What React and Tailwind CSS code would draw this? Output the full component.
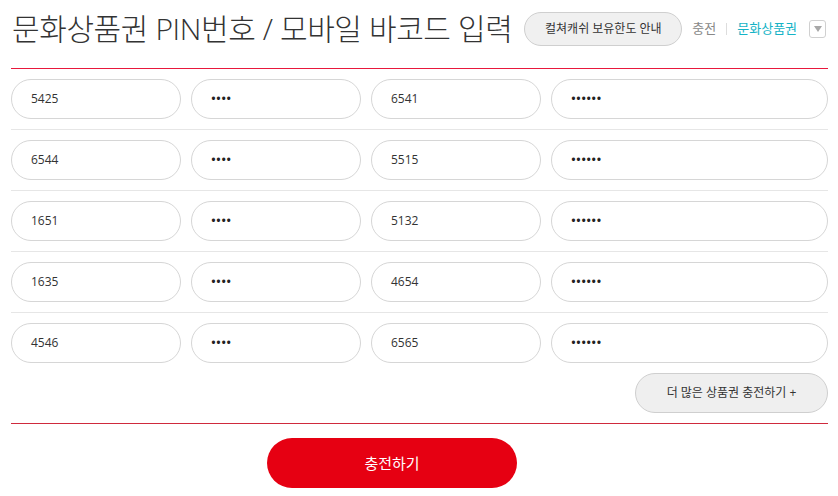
import React from 'react';

const pins = [
  ['5425', '6541'],
  ['6544', '5515'],
  ['1651', '5132'],
  ['1635', '4654'],
  ['4546', '6565'],
];

const font = { fontFamily: '"Open Sans", "Noto Sans CJK KR", sans-serif' };

function Field({ children, wide }) {
  return (
    <div
      className={`h-[40px] ${wide ? 'w-[277px]' : 'w-[170px]'} flex items-center pl-[19px] rounded-full border border-[#d6d6d6] bg-white text-[12px] text-[#333]`}
    >
      {children}
    </div>
  );
}

export default function App() {
  return (
    <div className="w-[838px] h-[496px] bg-white overflow-hidden" style={font}>
      <div className="ml-[11px] w-[817px]">
        {/* 상단 헤더 */}
        <div className="h-[69px] pb-[11px] flex items-center border-b border-[#e8183c] whitespace-nowrap">
          <h1 className="text-[30px] leading-none tracking-[-0.4px] text-[#333] font-light ml-[1px]">
            문화상품권 PIN번호 / 모바일 바코드 입력
          </h1>
          <button className="ml-[12px] h-[34px] w-[158px] rounded-full border border-[#cfcfcf] bg-[#f0f0f0] text-[12px] text-[#333]">
            컬쳐캐쉬 보유한도 안내
          </button>
          <span className="ml-[10px] text-[13px] text-[#888]">충전</span>
          <span className="mx-[10px] w-px h-[12px] bg-[#ddd]" />
          <span className="text-[13px] text-[#15b3c6]">문화상품권</span>
          <span className="ml-[12px] mr-[-8px] w-[17px] h-[18px] rounded-[3px] border border-[#d0d0d0] flex items-center justify-center">
            <svg width="8" height="6" viewBox="0 0 8 6">
              <path d="M0 0h8L4 6z" fill="#a8a8a8" />
            </svg>
          </span>
        </div>

        {/* PIN 입력 */}
        {pins.map(([a, b], i) => (
          <div
            key={i}
            className={`flex gap-[10px] pt-[10px] ${i < pins.length - 1 ? 'pb-[10px] border-b border-[#e6e6e6]' : ''}`}
          >
            <Field>{a}</Field>
            <Field>
              <span className="text-[13px] font-semibold tracking-[0.2px] text-[#222]">••••</span>
            </Field>
            <Field>{b}</Field>
            <Field wide>
              <span className="text-[13px] font-semibold tracking-[0.2px] text-[#222]">••••••</span>
            </Field>
          </div>
        ))}

        <div className="flex justify-end pt-[10px] pb-[10px] border-b border-[#cf2a3d]">
          <button className="h-[40px] w-[193px] rounded-full border border-[#cfcfcf] bg-[#efefef] text-[12px] text-[#333]">
            더 많은 상품권 충전하기 +
          </button>
        </div>

        <div className="pt-[14px]">
          <button className="ml-[256px] h-[50px] w-[250px] rounded-full bg-[#e60012] text-white text-[15px]">
            충전하기
          </button>
        </div>
      </div>
    </div>
  );
}
